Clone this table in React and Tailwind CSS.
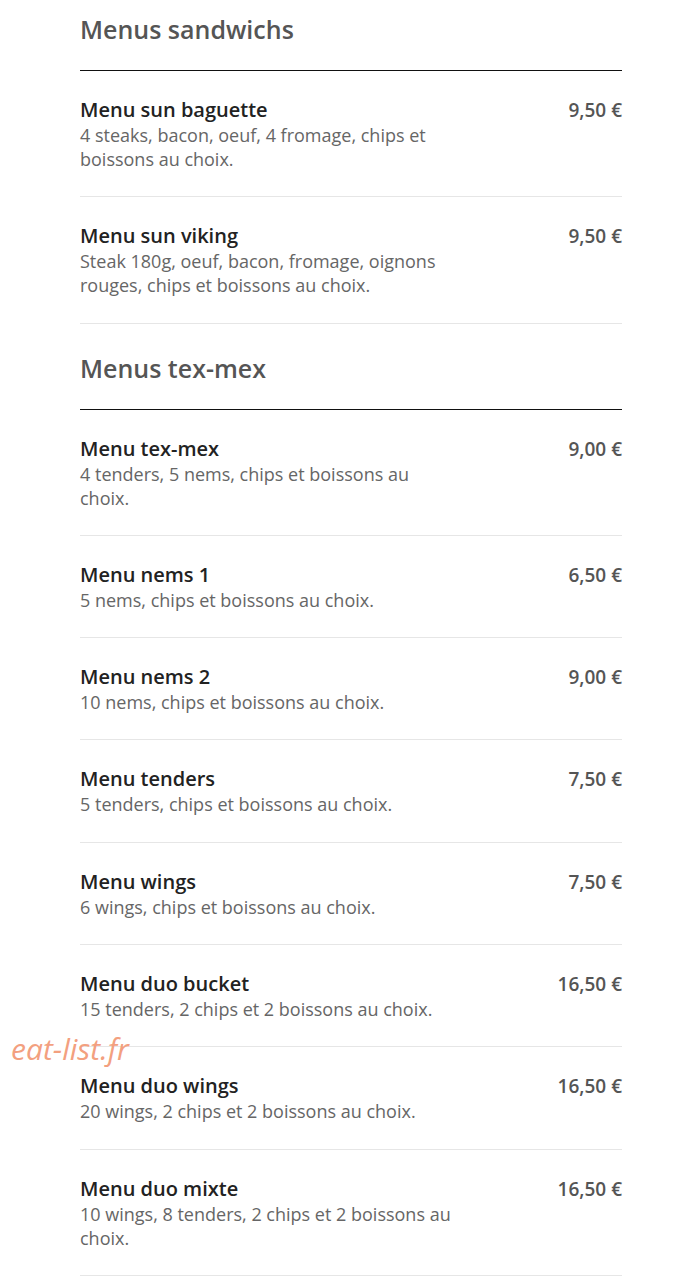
const sections = [
  {
    title: "Menus sandwichs",
    items: [
      { name: "Menu sun baguette", desc: "4 steaks, bacon, oeuf, 4 fromage, chips et boissons au choix.", price: "9,50 €" },
      { name: "Menu sun viking", desc: "Steak 180g, oeuf, bacon, fromage, oignons rouges, chips et boissons au choix.", price: "9,50 €" },
    ],
  },
  {
    title: "Menus tex-mex",
    items: [
      { name: "Menu tex-mex", desc: "4 tenders, 5 nems, chips et boissons au choix.", price: "9,00 €" },
      { name: "Menu nems 1", desc: "5 nems, chips et boissons au choix.", price: "6,50 €" },
      { name: "Menu nems 2", desc: "10 nems, chips et boissons au choix.", price: "9,00 €" },
      { name: "Menu tenders", desc: "5 tenders, chips et boissons au choix.", price: "7,50 €" },
      { name: "Menu wings", desc: "6 wings, chips et boissons au choix.", price: "7,50 €" },
      { name: "Menu duo bucket", desc: "15 tenders, 2 chips et 2 boissons au choix.", price: "16,50 €" },
      { name: "Menu duo wings", desc: "20 wings, 2 chips et 2 boissons au choix.", price: "16,50 €" },
      { name: "Menu duo mixte", desc: "10 wings, 8 tenders, 2 chips et 2 boissons au choix.", price: "16,50 €" },
    ],
  },
];

function Item({ item }) {
  return (
    <div className="flex justify-between border-b border-[#e6e6e6] pt-[26px] pb-[25.3px]">
      <div className="w-[376px]">
        <div className="text-[20px] leading-[26px] font-semibold text-[#222]">{item.name}</div>
        <div className="text-[18px] leading-[24px] text-[#666]">{item.desc}</div>
      </div>
      <div className="text-[19px] leading-[26px] font-semibold text-[#555]">{item.price}</div>
    </div>
  );
}

export default function App() {
  return (
    <div className="relative min-h-[1281px] bg-white" style={{ fontFamily: '"Open Sans", sans-serif' }}>
      <div className="mx-[80px] w-[542px] pt-[13px]">
        {sections.map((s, i) => (
          <div key={s.title} className={i > 0 ? "mt-[28px]" : ""}>
            <h2 className="text-[25px] leading-[32px] font-semibold text-[#555] pb-[25px] border-b border-[#111]">{s.title}</h2>
            {s.items.map((it) => (
              <Item key={it.name} item={it} />
            ))}
          </div>
        ))}
      </div>
      <div className="absolute left-[11px] top-[1029px] text-[30px] italic text-[#f3a07f] leading-[40px]">eat-list.fr</div>
    </div>
  );
}
